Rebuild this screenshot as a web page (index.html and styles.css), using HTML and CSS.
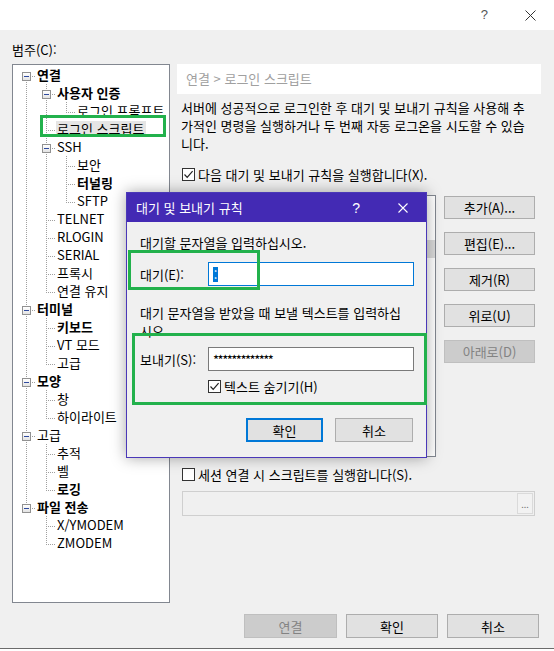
FILE: index.html
```html
<!DOCTYPE html>
<html lang="ko">
<head>
<meta charset="utf-8">
<title>세션 속성</title>
<link rel="stylesheet" href="styles.css">
</head>
<body>
<div class="window">
  <div class="titlebar">
    <span class="tb-help">?</span>
    <svg class="tb-close" width="11" height="11" viewBox="0 0 11 11"><path d="M0.5 0.5 L10.5 10.5 M10.5 0.5 L0.5 10.5" stroke="#333" stroke-width="1" fill="none"/></svg>
  </div>
  <div class="main">
    <div class="cat-label">범주(C):</div>
    <div class="content">
      <div class="tree">
        <div class="row"><span class="c rtop"><i class="box"></i></span><span class="lbl b">연결</span></div>
        <div class="row"><span class="c pipe"></span><span class="c tee"><i class="box"></i></span><span class="lbl b">사용자 인증</span></div>
        <div class="row"><span class="c pipe"></span><span class="c pipe"></span><span class="c ell"></span><span class="lbl">로그인 프롬프트</span></div>
        <div class="row"><span class="c pipe"></span><span class="c tee"></span><span class="lbl sel">로그인 스크립트</span></div>
        <div class="row"><span class="c pipe"></span><span class="c tee"><i class="box"></i></span><span class="lbl">SSH</span></div>
        <div class="row"><span class="c pipe"></span><span class="c pipe"></span><span class="c tee"></span><span class="lbl">보안</span></div>
        <div class="row"><span class="c pipe"></span><span class="c pipe"></span><span class="c tee"></span><span class="lbl b">터널링</span></div>
        <div class="row"><span class="c pipe"></span><span class="c pipe"></span><span class="c ell"></span><span class="lbl">SFTP</span></div>
        <div class="row"><span class="c pipe"></span><span class="c tee"></span><span class="lbl">TELNET</span></div>
        <div class="row"><span class="c pipe"></span><span class="c tee"></span><span class="lbl">RLOGIN</span></div>
        <div class="row"><span class="c pipe"></span><span class="c tee"></span><span class="lbl">SERIAL</span></div>
        <div class="row"><span class="c pipe"></span><span class="c tee"></span><span class="lbl">프록시</span></div>
        <div class="row"><span class="c pipe"></span><span class="c ell"></span><span class="lbl">연결 유지</span></div>
        <div class="row"><span class="c tee"><i class="box"></i></span><span class="lbl b">터미널</span></div>
        <div class="row"><span class="c pipe"></span><span class="c tee"></span><span class="lbl b">키보드</span></div>
        <div class="row"><span class="c pipe"></span><span class="c tee"></span><span class="lbl">VT 모드</span></div>
        <div class="row"><span class="c pipe"></span><span class="c ell"></span><span class="lbl">고급</span></div>
        <div class="row"><span class="c tee"><i class="box"></i></span><span class="lbl b">모양</span></div>
        <div class="row"><span class="c pipe"></span><span class="c tee"></span><span class="lbl">창</span></div>
        <div class="row"><span class="c pipe"></span><span class="c ell"></span><span class="lbl">하이라이트</span></div>
        <div class="row"><span class="c tee"><i class="box"></i></span><span class="lbl">고급</span></div>
        <div class="row"><span class="c pipe"></span><span class="c tee"></span><span class="lbl">추적</span></div>
        <div class="row"><span class="c pipe"></span><span class="c tee"></span><span class="lbl">벨</span></div>
        <div class="row"><span class="c pipe"></span><span class="c ell"></span><span class="lbl b">로깅</span></div>
        <div class="row"><span class="c ell"><i class="box"></i></span><span class="lbl b">파일 전송</span></div>
        <div class="row"><span class="c blank"></span><span class="c tee"></span><span class="lbl">X/YMODEM</span></div>
        <div class="row"><span class="c blank"></span><span class="c ell"></span><span class="lbl">ZMODEM</span></div>
      </div>
      <div class="panel">
        <div class="crumb">연결 &gt; 로그인 스크립트</div>
        <div class="panel-body">
          <p class="desc">서버에 성공적으로 로그인한 후 대기 및 보내기 규칙을 사용해 추<br>가적인 명령을 실행하거나 두 번째 자동 로그온을 시도할 수 있습<br>니다.</p>
          <div class="check chk1"><span class="cb"><svg width="11" height="11" viewBox="0 0 11 11"><path d="M1.5 5.5 L4.2 8.3 L9.6 2.2" stroke="#222" stroke-width="1.2" fill="none"/></svg></span>다음 대기 및 보내기 규칙을 실행합니다(X).</div>
          <div class="rules">
            <div class="list"><div class="list-row"></div></div>
            <div class="rule-btns">
              <button class="btn rb">추가(A)...</button>
              <button class="btn rb">편집(E)...</button>
              <button class="btn rb">제거(R)</button>
              <button class="btn rb">위로(U)</button>
              <button class="btn rb dis">아래로(D)</button>
            </div>
          </div>
          <div class="check chk2"><span class="cb"></span>세션 연결 시 스크립트를 실행합니다(S).</div>
          <div class="path"><span class="browse">...</span></div>
        </div>
      </div>
    </div>
    <div class="footer">
      <button class="btn fb dis">연결</button>
      <button class="btn fb">확인</button>
      <button class="btn fb">취소</button>
    </div>
  </div>
  <div class="bottom-edge"></div>
</div>

<div class="dialog">
  <div class="dlg-title">
    <span class="dlg-name">대기 및 보내기 규칙</span>
    <span class="dlg-help">?</span>
    <svg class="dlg-close" width="10" height="10" viewBox="0 0 10 10"><path d="M0.5 0.5 L9.5 9.5 M9.5 0.5 L0.5 9.5" stroke="#fff" stroke-width="1.1" fill="none"/></svg>
  </div>
  <div class="dlg-body">
    <p class="dlg-p1">대기할 문자열을 입력하십시오.</p>
    <div class="field"><span class="field-label">대기(E):</span><div class="input focus"><span class="caret-sel">:</span></div></div>
    <p class="dlg-p2">대기 문자열을 받았을 때 보낼 텍스트를 입력하십<br>시오.</p>
    <div class="field f2"><span class="field-label">보내기(S):</span><div class="input stars">*************</div></div>
    <div class="check dlg-check"><span class="cb"><svg width="11" height="11" viewBox="0 0 11 11"><path d="M1.5 5.5 L4.2 8.3 L9.6 2.2" stroke="#222" stroke-width="1.2" fill="none"/></svg></span>텍스트 숨기기(H)</div>
    <div class="dlg-btns">
      <button class="btn db default">확인</button>
      <button class="btn db">취소</button>
    </div>
  </div>
</div>

<div class="mark m-tree"></div>
<div class="mark m-wait"></div>
<div class="mark m-send"></div>
</body>
</html>
```

FILE: styles.css
```css
* { box-sizing: border-box; }
html, body { margin: 0; padding: 0; }
body {
  width: 554px;
  height: 651px;
  background: #ffffff;
  font-family: "Noto Sans CJK KR", "Noto Sans", sans-serif;
  font-size: 13px;
  color: #000;
  position: relative;
  overflow: hidden;
}
p { margin: 0; }

.window { height: 649px; display: flex; flex-direction: column; }

.titlebar {
  height: 30px;
  flex: none;
  background: #fff;
  display: flex;
  justify-content: flex-end;
  align-items: center;
  padding-right: 18px;
}
.tb-help {
  font-family: "Liberation Sans", sans-serif;
  font-size: 13px;
  color: #555;
  margin-right: 37px;
  line-height: 14px;
}
.tb-close { display: block; }

.main {
  height: 618px;
  flex: none;
  background: #f0f0f0;
  padding: 0 13px 0 12px;
  display: flex;
  flex-direction: column;
}
.cat-label { height: 34px; padding-top: 11px; line-height: 17px; }

.content { display: flex; gap: 7px; height: 539px; }

/* tree */
.tree {
  width: 158px;
  height: 539px;
  flex: none;
  background: #fff;
  border: 1px solid #828790;
  padding: 1px 0 0 3px;
  overflow: hidden;
}
.row { display: flex; height: 18px; white-space: nowrap; }
.c { position: relative; width: 20px; height: 18px; flex: none; }
.c::before {
  content: "";
  position: absolute;
  left: 10px; top: 0; bottom: 0; width: 1px;
  background: repeating-linear-gradient(to bottom, #a0a0a0 0 1px, transparent 1px 2px);
}
.c::after {
  content: "";
  position: absolute;
  left: 11px; right: 0; top: 10px; height: 1px;
  background: repeating-linear-gradient(to right, transparent 0 1px, #a0a0a0 1px 2px);
}
.pipe::after { display: none; }
.ell::before { bottom: 7px; }
.rtop::before { top: 10px; }
.blank::before, .blank::after { display: none; }
.box {
  position: absolute;
  left: 6px; top: 6px;
  width: 9px; height: 9px;
  border: 1px solid #919191;
  background: linear-gradient(#ffffff, #e3e3e3);
  z-index: 1;
}
.box::after {
  content: "";
  position: absolute;
  left: 1px; top: 3px; width: 5px; height: 1px;
  background: #2f4a9e;
}
.lbl {
  display: inline-block;
  height: 16px;
  line-height: 16px;
  margin-top: 1px;
  padding: 0 2px 0 1px;
  margin-left: 0;
}
.lbl.b { font-weight: 700; }
.lbl.sel { background: #e5e5e5; }

/* right panel */
.panel { width: 364px; flex: none; display: flex; flex-direction: column; }
.crumb {
  height: 30px;
  background: #fff;
  line-height: 29px;
  padding-left: 9px;
  color: #a0a0a0;
}
.panel-body { padding: 0 6px 0 5px; display: flex; flex-direction: column; }
.desc { margin: 5px 0 0 -1px; line-height: 18px; white-space: nowrap; }

.check { display: flex; align-items: center; height: 17px; line-height: 17px; white-space: nowrap; }
.cb {
  width: 13px; height: 13px;
  border: 1px solid #333;
  background: #fff;
  margin-right: 3px;
  flex: none;
  display: flex;
  align-items: center;
  justify-content: center;
}
.cb svg { display: block; }
.chk1 { margin-top: 13px; }

.rules { display: flex; gap: 8px; margin-top: 12px; height: 262px; }
.list {
  width: 254px;
  height: 262px;
  background: #fff;
  border: 1px solid #828790;
}
.list-row { margin-top: 44px; height: 18px; background: #dadada; }
.rule-btns { width: 91px; display: flex; flex-direction: column; gap: 13px; padding-top: 1px; }

.btn {
  font: inherit;
  color: #000;
  background: #e1e1e1;
  border: 1px solid #adadad;
  padding: 0;
  margin: 0;
  line-height: 1;
}
.btn.dis { background: #cccccc; border-color: #bfbfbf; color: #838383; }
.rb { width: 91px; height: 23px; }

.chk2 { margin-top: 9px; }
.path {
  margin-top: 8px;
  height: 25px;
  border: 1px solid #cfcfcf;
  background: #f0f0f0;
  display: flex;
  justify-content: flex-end;
  padding: 1px;
}
.browse {
  width: 16px;
  height: 21px;
  border: 1px solid #dadada;
  background: #f2f2f2;
  color: #777;
  font-size: 9px;
  line-height: 22px;
  text-align: center;
}

.footer {
  display: flex;
  justify-content: flex-end;
  gap: 9px;
  margin-top: 11px;
  padding-right: 2px;
}
.fb { width: 92px; height: 24px; }
.fb:first-child { width: 93px; }

.bottom-edge { height: 1px; background: #6b6b6b; flex: none; }

/* dialog */
.dialog {
  position: absolute;
  left: 126px;
  top: 192px;
  width: 301px;
  height: 266px;
  background: #f0f0f0;
  border: 1px solid #4a38b8;
  box-shadow: 0 0 14px rgba(0, 0, 0, 0.35);
}
.dlg-title {
  height: 29px;
  background: #432ab4;
  color: #fff;
  display: flex;
  align-items: center;
  padding-left: 9px;
}
.dlg-name { flex: 1; }
.dlg-help {
  font-family: "Liberation Sans", sans-serif;
  font-size: 14px;
  margin-right: 38px;
}
.dlg-close { display: block; margin-right: 18px; }
.dlg-body { padding: 13px 12px 0 13px; }
.dlg-p1 { line-height: 16px; }
.field { display: flex; align-items: center; margin-top: 11px; }
.field-label { width: 68px; flex: none; }
.input {
  width: 206px;
  height: 24px;
  background: #fff;
  border: 1px solid #7a7a7a;
  padding-left: 4px;
  display: flex;
  align-items: center;
}
.input.focus { border-color: #0078d7; }
.caret-sel {
  display: inline-block;
  background: #0078d7;
  color: #fff;
  width: 5px;
  height: 15px;
  line-height: 15px;
  text-align: center;
}
.stars { letter-spacing: -1.5px; }
.dlg-p2 { margin-top: 18px; line-height: 18px; white-space: nowrap; }
.f2 { margin-top: 7px; }
.dlg-check { margin-top: 9px; padding-left: 68px; height: 13px; }
.dlg-btns { display: flex; justify-content: flex-end; gap: 12px; margin-top: 25px; padding-right: 1px; }
.db { width: 77px; height: 24px; }
.db:last-child { width: 78px; }
.db.default { border: 2px solid #0078d7; }

/* annotation marks */
.mark { position: absolute; border: 3px solid #22b14c; }
.m-tree { left: 40px; top: 115px; width: 126px; height: 22px; }
.m-wait { left: 128px; top: 250px; width: 132px; height: 40px; }
.m-send { left: 132px; top: 333px; width: 295px; height: 72px; }
```
